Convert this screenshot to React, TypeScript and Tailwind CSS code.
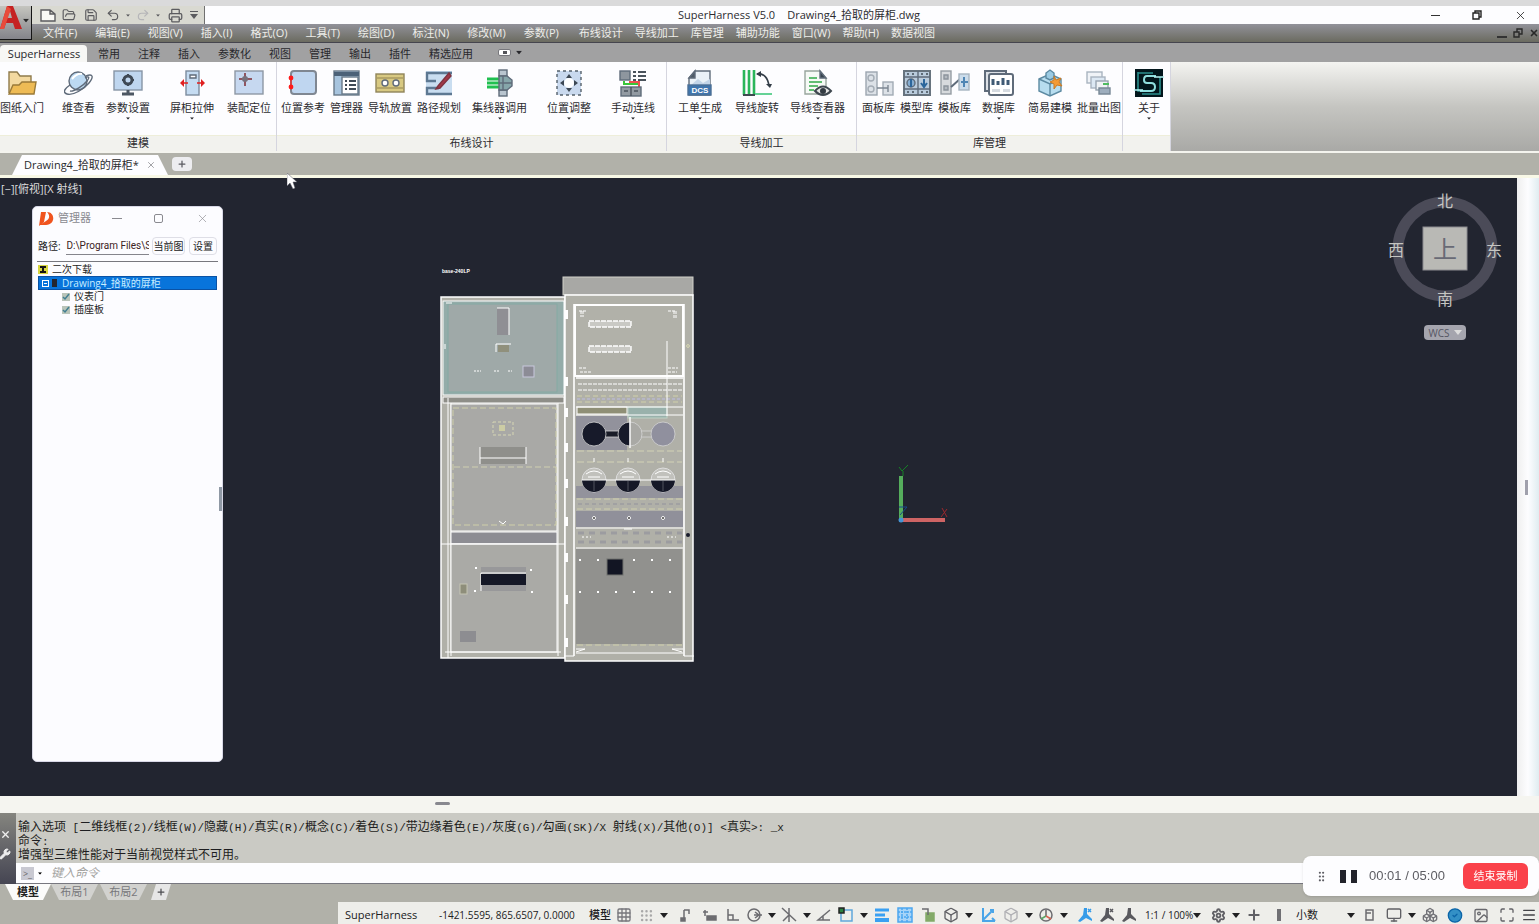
import React from 'react';
import {
  Box,
  Boxes,
  CircleCheck,
  FolderOpen,
  Grid3x3,
  Grip,
  GripVertical,
  Image as ImageIcon,
  Maximize,
  Menu,
  Monitor,
  PersonStanding,
  Plus,
  Printer,
  Redo2,
  Save,
  Settings,
  Undo2,
  Wrench,
  X,
} from 'lucide-react';

interface RibbonTool {
  label: string;
  icon: React.ReactNode;
  space: string;
  menu?: boolean;
}

interface RibbonGroup {
  title: string;
  width: string;
  tools: RibbonTool[];
}

const Icon = ({ children }: { children: React.ReactNode }) => (
  <svg viewBox="0 0 30 28" className="h-7 w-[30px] shrink-0" fill="none" stroke="#5f6b7a" strokeWidth="1.4">
    {children}
  </svg>
);

const FolderIcon = () => (
  <Icon>
    <path d="M2 24V3h8l3 4h11v6" fill="#f3d9a0" stroke="#8f7b4c" />
    <path d="M2 25l4-9h6l3-3h14l-2 12z" fill="#eebb55" stroke="#9a7a38" />
  </Icon>
);

const OrbitIcon = () => (
  <Icon>
    <circle cx="14" cy="12" r="9" fill="#bcd9f2" />
    <path d="M8 10q5-6 10-5" stroke="#ffffff" strokeWidth="2" />
    <path d="M22 7c7-3 8 1 3 7S9 27 3 25s0-7 3-9" />
    <path d="M21 9c4-2 5-1 2 3S10 23 6 22" />
  </Icon>
);

const MonitorIcon = () => (
  <Icon>
    <rect x="1" y="2" width="28" height="19" fill="#bfd6ef" stroke="#8794a5" />
    <circle cx="15" cy="11" r="4" stroke="#3f4955" strokeWidth="3" />
    <path d="M15 5v2M15 15v2M9 11h2M19 11h2" stroke="#3f4955" strokeWidth="2" />
    <path d="M15 21v3M9 25h12" stroke="#4d5763" strokeWidth="3" />
  </Icon>
);

const StretchIcon = () => (
  <Icon>
    <rect x="9" y="2" width="13" height="24" fill="#c5dcf2" stroke="#7c8c9e" />
    <path d="M13 6h6v3h-6z" fill="#ffffff" />
    <path d="M11 14H4M20 14h7" stroke="#e02020" strokeWidth="1.6" />
    <path d="M7 10l-4 4 4 4zM24 10l4 4-4 4z" fill="#e02020" stroke="none" />
  </Icon>
);

const AssembleIcon = () => (
  <Icon>
    <rect x="1" y="2" width="28" height="23" fill="#c6d8f0" stroke="#8d97a4" />
    <path d="M11 4v13M5 10h13" stroke="#8f5560" strokeWidth="2" />
    <circle cx="11" cy="10" r="3" fill="#77707c" stroke="none" />
  </Icon>
);

const PositionIcon = () => (
  <Icon>
    <rect x="3" y="2" width="25" height="23" rx="3" fill="#bfd6f0" stroke="#7f8792" strokeWidth="2" />
    <path d="M3 9v10" stroke="#f03030" />
    <circle cx="3" cy="9" r="2.4" fill="#ff1a1a" stroke="none" />
    <circle cx="3" cy="18" r="2.4" fill="#ff1a1a" stroke="none" />
  </Icon>
);

const ManagerIcon = () => (
  <Icon>
    <rect x="2" y="2" width="25" height="24" fill="#a7c4de" stroke="#697989" />
    <path d="M2 5h25" stroke="#4c6278" strokeWidth="4" />
    <rect x="10" y="8" width="16" height="17" fill="#ffffff" stroke="#697989" />
    <path d="M13 12h2M17 12h7M13 16h2M17 16h7M13 20h2M17 20h7" stroke="#3f4a55" strokeWidth="2" />
  </Icon>
);

const RailIcon = () => (
  <Icon>
    <rect x="1" y="5" width="28" height="18" fill="#d8c982" stroke="#8f845a" />
    <path d="M1 9h28M1 19h28" stroke="#a99a62" />
    <circle cx="10" cy="14" r="3" fill="#ffffff" />
    <circle cx="21" cy="14" r="3" fill="#ffffff" />
  </Icon>
);

const PathIcon = () => (
  <Icon>
    <rect x="2" y="2" width="26" height="24" fill="#c9ddf0" stroke="none" />
    <path d="M28 4H3v8h9M28 25H3v-6h12" stroke="#5d7892" strokeWidth="2.4" />
    <path d="M25 4L14 17l-2 3 4-1L27 7z" fill="#a33848" stroke="#7e3340" />
  </Icon>
);

const ConnectorIcon = () => (
  <Icon>
    <path d="M2 10h14M2 14h14M2 18h14" stroke="#20c050" strokeWidth="3" />
    <rect x="14" y="1" width="8" height="6" fill="#b9c5cf" />
    <rect x="14" y="21" width="8" height="6" fill="#b9c5cf" />
    <path d="M14 7h8l5 4v6l-5 4h-8z" fill="#86a6aa" />
    <path d="M18 7v14M14 14h13" />
  </Icon>
);

const AdjustIcon = () => (
  <Icon>
    <rect x="3" y="2" width="24" height="24" fill="#c9d9ee" stroke="#56616c" strokeWidth="1.4" strokeDasharray="3 3" />
    <circle cx="15" cy="14" r="5" fill="#ffffff" stroke="none" />
    <path d="M15 5l3 4h-6zM15 23l3-4h-6zM6 14l4-3v6zM24 14l-4-3v6z" fill="#3d4854" stroke="none" />
  </Icon>
);

const WiringIcon = () => (
  <Icon>
    <rect x="2" y="2" width="10" height="9" fill="#8e969e" />
    <path d="M15 3h3M20 3h8M15 7h3M20 7h8M15 11h3M20 11h8" stroke="#4a535c" strokeWidth="2" />
    <path d="M6 12v3h14" stroke="#39c639" strokeWidth="2" />
    <path d="M11 13h10v5" stroke="#f05050" strokeWidth="2" />
    <rect x="3" y="18" width="20" height="9" fill="#929aa2" />
    <path d="M13 18v9M6 22h4M16 22h4" stroke="#4a535c" />
  </Icon>
);

const DocIcon = () => (
  <Icon>
    <path d="M4 26V9l6-7h15v24z" fill="#eaf1f7" />
    <path d="M4 9l6-7v7z" fill="#4e5a66" />
    <path d="M6 16l7-6 5 4 7-4v6z" fill="#c3d5e8" stroke="none" />
    <rect x="3" y="16" width="23" height="10" fill="#3f75ad" stroke="#4c6f96" />
    <text x="15" y="24" textAnchor="middle" fontFamily="Liberation Sans" fontSize="8" fontWeight="bold" fill="#ffffff" stroke="none">DCS</text>
  </Icon>
);

const RotateWireIcon = () => (
  <Icon>
    <path d="M2 1v25M7 1v25M12 1v25" stroke="#2ab65a" strokeWidth="2.6" />
    <path d="M1 26h12" stroke="#3f4a50" strokeWidth="2" />
    <path d="M13 25h17" stroke="#65d296" strokeWidth="2" />
    <path d="M15 5c7-1 11 4 12 12" stroke="#333d47" strokeWidth="1.6" />
    <path d="M14 5l5-3v6zM28 19l-4-4h6z" fill="#333d47" stroke="none" />
  </Icon>
);

const InspectIcon = () => (
  <Icon>
    <path d="M2 2h15l6 7v16H2z" fill="#f6faf6" stroke="#98a59d" />
    <path d="M17 2l6 7h-6z" fill="#38444f" />
    <path d="M6 9h8M6 13h13M6 17h9M6 21h5" stroke="#61be73" strokeWidth="2" />
    <path d="M12 22q8-9 16 0-8 8-16 0z" fill="#e5e5e5" stroke="#3f4850" strokeWidth="2" />
    <circle cx="20" cy="22" r="3" fill="#333b43" stroke="none" />
  </Icon>
);

const PanelLibIcon = () => (
  <Icon>
    <rect x="2" y="3" width="11" height="23" fill="#dce1e7" stroke="#9ca5b0" />
    <circle cx="7" cy="9" r="3" stroke="#a4acb5" />
    <circle cx="7" cy="20" r="3" stroke="#a4acb5" />
    <rect x="19" y="13" width="10" height="13" fill="#dde2e8" stroke="#a2abb5" />
    <path d="M13 19h11M24 16v7" stroke="#7c8792" />
  </Icon>
);

const ModelLibIcon = () => (
  <Icon>
    <rect x="2" y="2" width="26" height="24" fill="#b9cbdc" stroke="#67737e" strokeWidth="2" />
    <path d="M16 2v24M2 8h26M2 20h26" />
    <circle cx="9" cy="14" r="4" fill="#86aed2" />
    <path d="M9 10v8M22 10v8M19 14l3 4 3-4" stroke="#2c669b" strokeWidth="2" />
    <path d="M5 5h2M10 5h2M5 23h2M10 23h2M19 5h2M24 5h2M19 23h2M24 23h2" stroke="#424d57" />
  </Icon>
);

const TemplateLibIcon = () => (
  <Icon>
    <rect x="1" y="2" width="10" height="23" fill="#d7dadd" stroke="#969da4" />
    <path d="M4 6h4v4H4zM4 17h4v4H4z" fill="#b4bac0" stroke="#8c949c" />
    <path d="M11 18l9-8" strokeWidth="2" />
    <rect x="19" y="5" width="10" height="16" fill="#cbdceb" stroke="#a6b4c1" />
    <path d="M24 8v10M21 13h7" stroke="#4e85b4" strokeWidth="2" />
  </Icon>
);

const DatabaseIcon = () => (
  <Icon>
    <path d="M1 2h21v20H1z" fill="#dce0e6" strokeWidth="2" />
    <rect x="5" y="5" width="24" height="21" rx="2" fill="#ffffff" strokeWidth="2" />
    <path d="M9 16v-6M14 16v-4M19 16V9M24 16v-5" stroke="#3f5a75" strokeWidth="3" />
    <path d="M8 20h8v3H8zM19 20h7v3h-7z" fill="#d6dbe1" stroke="none" />
  </Icon>
);

const CubeIcon = () => (
  <Icon>
    <path d="M4 10l11-5 11 5v12l-11 5-11-5z" fill="#b7ddef" stroke="#5c8aa2" />
    <path d="M4 10l11 5 11-5M15 15v12" stroke="#5c8aa2" />
    <path d="M11 4l4-3 4 3v5l-4 2-4-2z" fill="#9ccbe3" stroke="#5c8aa2" />
    <path d="M19 7l2 4 5-2-2 4 3 4-5-1-3 4v-5l-4-2 4-2z" fill="#f39a35" stroke="#c97a25" strokeWidth="1" />
  </Icon>
);

const BatchIcon = () => (
  <Icon>
    <rect x="3" y="3" width="15" height="11" fill="#f0f3f7" stroke="#a9b4c0" />
    <rect x="7" y="8" width="14" height="11" fill="#dce8f3" stroke="#a9b4c0" />
    <rect x="12" y="12" width="12" height="9" fill="#eff2f5" stroke="#98a4b0" />
    <path d="M15 19h11v6H15z" fill="#9dadbd" stroke="#788897" />
    <path d="M19 15h6" stroke="#4ebb60" strokeWidth="2" />
  </Icon>
);

const AboutIcon = () => (
  <Icon>
    <rect x="1" y="0" width="28" height="28" fill="#02161c" stroke="none" />
    <path d="M4 3v19h3M4 4h15M26 8v17H8" stroke="#2b8f8d" strokeWidth="1.6" />
    <path d="M22 7H13q-3 0-3 4 0 3 3 3h4q4 0 4 4t-4 4H6" stroke="#8fdede" strokeWidth="2" />
    <path d="M20 8h10M0 21h9" stroke="#b5f5f5" />
  </Icon>
);

const ribbon: RibbonGroup[] = [
  {
    title: '建模',
    width: 'w-[277px]',
    tools: [
      { label: '图纸入门', icon: <FolderIcon />, space: '' },
      { label: '维查看', icon: <OrbitIcon />, space: 'ml-[18px]' },
      { label: '参数设置', icon: <MonitorIcon />, space: 'ml-[11px]', menu: true },
      { label: '屏柜拉伸', icon: <StretchIcon />, space: 'ml-5', menu: true },
      { label: '装配定位', icon: <AssembleIcon />, space: 'ml-[13px]' },
    ],
  },
  {
    title: '布线设计',
    width: 'w-[390px]',
    tools: [
      { label: '位置参考', icon: <PositionIcon />, space: 'ml-1' },
      { label: '管理器', icon: <ManagerIcon />, space: 'ml-[5px]' },
      { label: '导轨放置', icon: <RailIcon />, space: 'ml-[5px]' },
      { label: '路径规划', icon: <PathIcon />, space: 'ml-[5px]' },
      { label: '集线器调用', icon: <ConnectorIcon />, space: 'ml-[11px]', menu: true },
      { label: '位置调整', icon: <AdjustIcon />, space: 'ml-5', menu: true },
      { label: '手动连线', icon: <WiringIcon />, space: 'ml-5', menu: true },
    ],
  },
  {
    title: '导线加工',
    width: 'w-[190px]',
    tools: [
      { label: '工单生成', icon: <DocIcon />, space: 'ml-[11px]', menu: true },
      { label: '导线旋转', icon: <RotateWireIcon />, space: 'ml-[13px]' },
      { label: '导线查看器', icon: <InspectIcon />, space: 'ml-[11px]', menu: true },
    ],
  },
  {
    title: '库管理',
    width: 'w-[266px]',
    tools: [
      { label: '面板库', icon: <PanelLibIcon />, space: 'ml-[5px]' },
      { label: '模型库', icon: <ModelLibIcon />, space: 'ml-[5px]' },
      { label: '模板库', icon: <TemplateLibIcon />, space: 'ml-[5px]' },
      { label: '数据库', icon: <DatabaseIcon />, space: 'ml-[11px]', menu: true },
      { label: '简易建模', icon: <CubeIcon />, space: 'ml-[13px]' },
      { label: '批量出图', icon: <BatchIcon />, space: 'ml-[5px]' },
    ],
  },
  {
    title: '',
    width: 'w-12',
    tools: [{ label: '关于', icon: <AboutIcon />, space: 'ml-[11px]', menu: true }],
  },
];

const menus = ['文件(F)', '编辑(E)', '视图(V)', '插入(I)', '格式(O)', '工具(T)', '绘图(D)', '标注(N)', '修改(M)', '参数(P)'];
const extraMenus = ['布线设计', '导线加工', '库管理', '辅助功能', '窗口(W)', '帮助(H)', '数据视图'];
const ribbonTabs = ['常用', '注释', '插入', '参数化', '视图', '管理', '输出', '插件', '精选应用'];

const history = [
  '输入选项 [二维线框(2)/线框(W)/隐藏(H)/真实(R)/概念(C)/着色(S)/带边缘着色(E)/灰度(G)/勾画(SK)/X 射线(X)/其他(O)] <真实>: _x',
  '命令:',
  '增强型三维性能对于当前视觉样式不可用。',
];

const hinges = [310, 377, 408, 443, 479, 517, 553, 595, 638];

const Arrow = ({ className = '' }: { className?: string }) => (
  <svg viewBox="0 0 8 5" className={`h-[5px] w-2 shrink-0 ${className}`}>
    <path d="M0 0h8L4 5z" fill="currentColor" />
  </svg>
);

const Cabinet = () => (
  <svg viewBox="430 255 280 415" className="absolute top-[77px] left-[430px] h-[415px] w-[280px]" fill="none" stroke="#ffffff">
    <text x="442" y="273" fontFamily="Liberation Sans" fontSize="5" fontWeight="bold" fill="#ffffff" stroke="none">base-240LP</text>

    {/* left cabinet with three doors */}
    <rect x="441" y="297" width="124" height="361" fill="#b0b0a8" strokeWidth="1.5" />
    <rect x="443" y="301" width="121" height="94" fill="#94aca9" />
    <rect x="448" y="304" width="109" height="88" fill="#9fa9a8" stroke="#84aaa4" />
    <rect x="497" y="308" width="12" height="27" fill="#8f8f94" stroke="none" />
    <path d="M497 308h12v27M496 352v-8h15" />
    <rect x="498" y="345" width="11" height="7" fill="#90907c" stroke="none" />
    <rect x="523" y="366" width="11" height="11" fill="#8c8c96" stroke="#c8c8dc" />
    <path d="M474 371h7M494 371h6M508 371h4" strokeDasharray="2 1" />
    <path d="M445 344v5M446 303h6" />
    <rect x="443" y="397" width="121" height="6" fill="#8e8e88" />
    <path d="M448 398v260M451 403v253M558 403v253" />
    <rect x="451" y="404" width="106" height="127" fill="#a9a9a6" />
    <rect x="453" y="408" width="103" height="117" stroke="#cfcfa9" strokeDasharray="6 3" />
    <rect x="493" y="422" width="20" height="13" stroke="#d6d6b4" strokeDasharray="3 2" />
    <rect x="499" y="425" width="6" height="6" fill="#cccca4" stroke="none" />
    <rect x="480" y="447" width="46" height="17" fill="#8f8f8b" stroke="none" />
    <path d="M480 447v17M480 458h46M526 447v17" />
    <path d="M454 467h102" stroke="#cfcfb0" strokeDasharray="6 3" />
    <path d="M499 521l4 3 3-3" />
    <rect x="451" y="532" width="106" height="12" fill="#8d8d93" />
    <rect x="451" y="544" width="106" height="108" fill="#aaaaa6" />
    <path d="M441 544h124M445 652h116" />
    <rect x="481" y="567" width="45" height="24" fill="#98989a" stroke="none" />
    <path d="M481 591v-18h45" />
    <rect x="481" y="574" width="45" height="11" fill="#151827" stroke="none" />
    <rect x="460" y="584" width="7" height="10" fill="#8e8e7a" stroke="#c5c5b4" />
    <rect x="460" y="631" width="16" height="11" fill="#8d8d91" stroke="none" />
    <path d="M475 568h2M530 570h2M474 591h2M531 592h2" strokeWidth="2" />

    {/* right cabinet frame */}
    <rect x="563" y="277" width="130" height="18" fill="#a8a8a5" stroke="#d2d2ca" />
    <rect x="565" y="295" width="128" height="366" fill="#b0b0a8" strokeWidth="1.5" />
    <path d="M574 304v352M684 304v352" strokeWidth="1.6" />
    <path d="M564 656h10M684 656h10" />
    {hinges.map((y) => (
      <rect key={y} x="565" y={y} width="3" height="9" fill="#ffffff" stroke="none" />
    ))}
    <rect x="575" y="305" width="108" height="71" fill="#b1b1a9" strokeWidth="2" />
    <path d="M579 311h7M581 311v6M583 311v6M668 311h8M674 311v7M676 311v7M579 368h7M580 372h11M668 368h10M668 372h9" strokeDasharray="3 1" />
    <rect x="589" y="321" width="42" height="6" fill="#c9c9c4" strokeWidth="1.4" strokeDasharray="5 1" />
    <rect x="589" y="346" width="42" height="6" fill="#c9c9c4" strokeWidth="1.4" strokeDasharray="5 1" />
    <path d="M576 378h107" strokeWidth="1.4" />
    <path d="M578 384h104M578 390h104" strokeDasharray="4 1" />
    <path d="M577 396h105M577 402h105" stroke="#d0d0aa" strokeDasharray="5 3" />
    <path d="M577 399h105" stroke="#bcbce4" strokeDasharray="3 2" />
    <rect x="577" y="407" width="50" height="7" fill="#8f8f76" />
    <rect x="628" y="407" width="39" height="11" fill="#99b1ab" stroke="#bdd2c5" />
    <path d="M667 341v75M576 407h107M576 415h107" />

    {/* bushings */}
    <rect x="576" y="416" width="51" height="34" fill="#92929c" stroke="none" />
    <g stroke="#d4d4d4" strokeWidth="0.8">
      <path d="M604 431h16v6h-16z" fill="#191c28" />
      <path d="M641 431h12v6h-12z" fill="#aaaaa4" />
      <circle cx="594" cy="434" r="12" fill="#171a2a" />
      <path d="M630 422a12 12 0 0 0 0 24z" fill="#171a2a" />
      <path d="M630 422a12 12 0 0 1 0 24" fill="#a9a9a5" />
      <circle cx="663" cy="434" r="12" fill="#90909e" />
    </g>
    <path d="M630 417v31" strokeWidth="1.4" />
    <path d="M577 451h105M577 462h105" stroke="#d2d2b5" strokeDasharray="7 3" />
    <rect x="576" y="486" width="107" height="12" fill="#93939c" stroke="none" />
    {[594, 628, 663].map((x) => (
      <g key={x}>
        <circle cx={x} cy="480" r="12" fill="#c1c1bc" stroke="#dddddd" />
        <path d={`M${x - 12} 480a12 12 0 0 0 24 0z`} fill="#151827" stroke="none" />
        <path d={`M${x - 8} 474q8-6 16 0M${x - 6} 477h12`} />
        <path d={`M${x} 481v10`} stroke="#50525f" />
        <circle cx={x} cy="518" r="1.5" fill="#333333" />
        <path d={`M${x} 458v4`} />
      </g>
    ))}
    <path d="M582 480h93" />
    <path d="M577 499h105M577 509h105" stroke="#cfcfad" strokeDasharray="6 3" />
    <path d="M578 504h104" stroke="#92929c" strokeDasharray="4 3" />
    <rect x="576" y="511" width="107" height="16" fill="#90909a" stroke="none" />
    {[594, 629, 663].map((x) => (
      <circle key={x} cx={x} cy="518" r="1.5" fill="#333333" />
    ))}
    <path d="M576 528h107M624 529h8M576 548h107" />
    <path d="M578 533h104M578 542h104" stroke="#9c9ca0" strokeWidth="3" strokeDasharray="6 5" />
    <path d="M582 537h9M667 537h9" strokeDasharray="2 2" />
    <rect x="576" y="549" width="106" height="95" fill="#91918e" stroke="none" />
    <path d="M579 560h100M579 592h100" strokeDasharray="2 16" strokeWidth="2" />
    <rect x="607" y="559" width="16" height="16" fill="#121523" stroke="#70726f" />
    <path d="M577 645h105" stroke="#cfcfaa" strokeDasharray="6 3" />
    <path d="M576 649h9l-9 3M683 649h-11l10 3M576 653h107" />
    <circle cx="688" cy="535" r="2" fill="#171a2a" stroke="none" />
    <circle cx="688" cy="346" r="1.4" stroke="#d8d8b2" />
  </svg>
);

const UcsIcon = () => (
  <svg viewBox="895 460 55 66" className="absolute top-[282px] left-[895px] h-[66px] w-[55px]" fill="none">
    <path d="M901 476v44" stroke="#55ad5c" strokeWidth="4" />
    <path d="M902 520h43" stroke="#ce6464" strokeWidth="4" />
    <path d="M899 467l3 4 6-6M903 471v5" stroke="#168126" />
    <path d="M942 508l5 9M947 509l-6 8" stroke="#9d282d" />
    <path d="M899 507h8l-7 8" stroke="#174b8c" />
    <circle cx="901" cy="520" r="2.5" fill="#4595d5" />
  </svg>
);

const ViewCube = () => (
  <div className="absolute top-1 right-[10px] w-[124px]">
    <svg viewBox="0 -8 124 132" className="h-[132px] w-full" fontFamily="Noto Sans CJK SC, sans-serif" fontSize="16" textAnchor="middle" fill="#c5c5c2">
      <circle cx="62" cy="59" r="47" fill="none" stroke="#4b4b58" strokeWidth="11" />
      <rect x="40" y="37" width="44" height="43" fill="#b9b9b5" stroke="#8c8c90" />
      <text x="62" y="68" fontSize="24" fill="#686a75">上</text>
      <text x="62" y="17">北</text>
      <text x="13" y="66">西</text>
      <text x="111" y="66">东</text>
      <text x="62" y="115">南</text>
    </svg>
    <button className="mx-auto mt-[11px] flex h-[15px] w-[42px] items-center justify-center gap-1 rounded-sm bg-[#a5a5ae] text-[10px] leading-none text-[#555563]">
      WCS <Arrow className="text-[#dddddd]" />
    </button>
  </div>
);

const ManagerPalette = () => (
  <section className="absolute top-7 left-8 flex h-[556px] w-[191px] flex-col rounded-[5px] border border-[#d8d8e6] bg-[#fcfcff]">
    <div className="flex h-[23px] items-center px-[5px] text-[#8a8a90]">
      <svg viewBox="0 0 16 16" className="h-4 w-4">
        <path d="M3 1h5L6 11l-5 4zM9 1c8 0 9 12-1 13H2l6-4c4-2 4-6 1-9z" fill="#f0541e" />
      </svg>
      <span className="ml-1 flex-1 text-[11px]">管理器</span>
      <button aria-label="最小化" className="mr-8 h-px w-2.5 bg-[#8a8a90]" />
      <button aria-label="最大化" className="mr-[33px] h-[9px] w-[9px] rounded-[2px] border border-[#8a8a90]" />
      <button aria-label="关闭" className="mr-2">
        <X size={13} strokeWidth={1.2} />
      </button>
    </div>
    <div className="mt-[7px] flex h-[18px] items-center px-[5px] text-[10px] text-[#222222]">
      <label htmlFor="path" className="w-[29px]">路径:</label>
      <input id="path" defaultValue="D:\Program Files\S" className="h-full w-[84px] min-w-0 border-b border-[#85858c] font-[Roboto,sans-serif] text-[#3b2222] outline-none" />
      <button className="ml-[3px] h-full w-[33px] shrink-0 rounded-sm border border-[#dedee6]">当前图</button>
      <button className="ml-1 h-full w-7 shrink-0 rounded-sm border border-[#dedee6]">设置</button>
    </div>
    <div className="mx-1 mt-[6px] border-t border-[#77777e]" />
    <ul className="mx-[5px] pt-px text-[10px] leading-[13px] text-[#1c1c1c]">
      <li className="flex h-[13px] items-center">
        <svg viewBox="0 0 10 9" className="mr-[4px] h-[9px] w-[10px]">
          <path d="M0 0h10v9H0z" fill="#d8d640" />
          <path d="M2 1h6v2H6v3h2v2H2V6h2V3H2z" fill="#151515" />
        </svg>
        二次下载
      </li>
      <li>
        <div className="flex h-[14px] items-center border border-[#0a52a5] bg-[#0874db] text-[#c9edff]">
          <span className="mx-[3px] flex h-[7px] w-[7px] items-center justify-center border border-white">
            <span className="h-px w-[3px] bg-white" />
          </span>
          <span className="mr-[5px] h-2 w-[5px] bg-[#242630]" />
          Drawing4_拾取的屏柜
        </div>
        <ul className="pl-6">
          {['仪表门', '插座板'].map((name) => (
            <li key={name} className="flex h-[13px] items-center">
              <svg viewBox="0 0 8 8" className="mr-[4px] h-2 w-2">
                <path d="M0 0h8v8H0z" fill="#b9c4b9" />
                <path d="M1 4l2 2 4-5" fill="none" stroke="#427f91" strokeWidth="1.5" />
              </svg>
              {name}
            </li>
          ))}
        </ul>
      </li>
    </ul>
    <div className="absolute top-[280px] right-0 h-6 w-[3px] bg-[#8f98a4]" />
  </section>
);

const Glyph = ({ children, tone = '#6c6c70' }: { children: React.ReactNode; tone?: string }) => (
  <svg viewBox="0 0 16 16" className="h-4 w-4" fill="none" stroke={tone} strokeWidth="1.5">
    {children}
  </svg>
);

// Annotation figure: a head on a three-pointed body
const Figure = ({ tone, mark }: { tone: string; mark?: boolean }) => (
  <svg viewBox="0 0 16 16" className="h-4 w-4">
    <path d="M7 1h3v6l5 5v2l-6-3-6 4-2-1 5-6z" fill={tone} />
    {mark && <path d="M11 2l3 3M14 2l-3 3" stroke={tone} strokeWidth="1.5" />}
  </svg>
);

interface StatusItem {
  name: string;
  icon: React.ReactNode;
  menu?: boolean;
  space: string;
}

const statusItems: StatusItem[] = [
  { name: '栅格', icon: <Grid3x3 size={16} color="#77777c" />, space: 'ml-1' },
  { name: '捕捉模式', icon: <Grip size={15} color="#a8a8a8" />, menu: true, space: 'ml-1.5' },
  { name: '推断约束', icon: <Glyph><path d="M7 3h5v4M7 3v9" /><path d="M4 11h4v3H4z" fill="#6c6c70" /></Glyph>, space: 'ml-[9px]' },
  { name: '动态输入', icon: <Glyph><path d="M2 5h5M4 3v6" /><path d="M6 9h9v4H6z" fill="#6c6c70" /></Glyph>, space: 'ml-2' },
  { name: '正交', icon: <Glyph><path d="M3 2v11h11M3 8h5v5" /></Glyph>, space: 'ml-2' },
  { name: '极轴追踪', icon: <Glyph><circle cx="8" cy="8" r="6" /><path d="M8 8h8M9 5l4 3-4 3" /></Glyph>, menu: true, space: 'ml-[5px]' },
  { name: '等轴测草图', icon: <Glyph><path d="M1 1l14 13M8 1v14M2 14l6-6" /></Glyph>, menu: true, space: 'ml-[5px]' },
  { name: '对象追踪', icon: <Glyph><path d="M14 3L2 13h12M7 9v4" /></Glyph>, space: 'ml-[5px]' },
  { name: '对象捕捉', icon: <Glyph tone="#60a8dc"><path d="M3 3h11v11H3z" /><path d="M1 1h5v5H1z" fill="#2b8240" stroke="#222222" /></Glyph>, menu: true, space: 'ml-1.5' },
  { name: '线宽', icon: <Glyph tone="#3aa0f2"><path d="M1 3h14M1 8h10" strokeWidth="3" /><path d="M1 13h14" strokeWidth="4" /></Glyph>, space: 'ml-1.5' },
  { name: '透明度', icon: <Glyph tone="#4ca7ef"><path d="M1 1h14v14H1z" fill="#a7d4f8" /><path d="M1 5h14M1 10h14M5 1v14M10 1v14" strokeDasharray="2 1" /></Glyph>, space: 'ml-[7px]' },
  { name: '选择循环', icon: <Glyph><path d="M6 6h8v8H6z" fill="#83aa68" stroke="#83aa68" /><path d="M2 2h6v6" /></Glyph>, space: 'ml-[7px]' },
  { name: '三维捕捉', icon: <Box size={16} color="#606065" />, menu: true, space: 'ml-[7px]' },
  { name: '动态坐标系', icon: <Glyph tone="#4aa5e8"><path d="M3 1v13h12M3 13L13 3M10 3h3v3M12 11l3 3" strokeWidth="2" /></Glyph>, space: 'ml-[7px]' },
  { name: '选择过滤', icon: <Box size={16} color="#b0b0b4" />, menu: true, space: 'ml-[7px]' },
  { name: '小控件', icon: <Glyph><circle cx="8" cy="8" r="6" /><path d="M8 3v6" stroke="#666666" /><path d="M8 9l-5 3" stroke="#58a865" /><path d="M8 9l5 3" stroke="#d56252" /></Glyph>, menu: true, space: 'ml-[5px]' },
  { name: '注释可见性', icon: <Figure tone="#369ce9" mark />, space: 'ml-[9px]' },
  { name: '自动缩放', icon: <Figure tone="#59595e" mark />, space: 'ml-1.5' },
  { name: '注释比例', icon: <Figure tone="#59595e" />, space: 'ml-1.5' },
];

const trailingItems: StatusItem[] = [
  { name: '快捷特性', icon: <Glyph><path d="M5 3h7v10H5zM5 6h5" /></Glyph>, space: 'ml-1.5' },
  { name: '锁定界面', icon: <Monitor size={16} color="#606065" />, menu: true, space: 'ml-[9px]' },
  { name: '隔离对象', icon: <Boxes size={16} color="#737378" />, space: 'ml-1.5' },
  { name: '硬件加速', icon: <CircleCheck size={17} color="#0c65a8" fill="#3390c6" />, space: 'ml-[9px]' },
  { name: '性能', icon: <ImageIcon size={17} color="#68686d" />, space: 'ml-2.5' },
  { name: '全屏显示', icon: <Maximize size={16} color="#606065" />, space: 'ml-2.5' },
  { name: '自定义', icon: <Menu size={16} color="#444448" />, space: 'ml-1.5' },
];

const StatusButton = ({ item }: { item: StatusItem }) => (
  <button aria-label={item.name} className={`flex shrink-0 items-center ${item.space}`}>
    <span className="flex w-4 justify-center">{item.icon}</span>
    {item.menu && <Arrow className="ml-1.5" />}
  </button>
);

const Titlebar = () => (
  <header className="relative">
    <div className="flex h-[18px] items-center bg-[#fdfdff]">
      <div className="flex h-full w-[205px] shrink-0 items-center border-r border-[#707070] bg-[#d9d9d1] pl-10 text-[#5b5b5f]">
        <button aria-label="新建">
          <svg viewBox="0 0 16 14" className="h-3.5 w-4" fill="#f8f8f5" stroke="currentColor" strokeWidth="1.4">
            <path d="M1 2h9l5 4v7H1zM10 2v4h5" />
          </svg>
        </button>
        <button aria-label="打开" className="ml-[6px]"><FolderOpen size={14} /></button>
        <button aria-label="保存" className="ml-2"><Save size={14} /></button>
        <button aria-label="放弃" className="ml-2"><Undo2 size={14} /></button>
        <Arrow className="ml-1 scale-50" />
        <button aria-label="重做" className="ml-1 text-[#b5b5b8]"><Redo2 size={14} /></button>
        <Arrow className="ml-1 scale-50" />
        <button aria-label="打印" className="ml-1.5"><Printer size={15} /></button>
        <button aria-label="自定义快速访问工具栏" className="ml-[7px] border-t border-current pt-0.5"><Arrow /></button>
      </div>
      <h1 className="flex flex-1 justify-center gap-3 pr-[38px] text-[11px] leading-[18px] text-[#2c2c30]">
        <span>SuperHarness V5.0</span>
        <span>Drawing4_拾取的屏柜.dwg</span>
      </h1>
      <div className="flex items-center text-[#222222]">
        <button aria-label="最小化" className="h-px w-[9px] bg-[#333333]" />
        <button aria-label="还原" className="ml-8">
          <svg viewBox="0 0 10 10" className="h-2.5 w-2.5" fill="none" stroke="currentColor" strokeWidth="1.4">
            <path d="M1 3h6v6H1zM3 3V1h6v6H7" />
          </svg>
        </button>
        <button aria-label="关闭" className="mr-3 ml-8"><X size={13} strokeWidth={1.5} /></button>
      </div>
    </div>
    <nav className="flex h-[19px] items-center border-b border-[#45454e] bg-linear-to-b from-[#92929a] to-[#6b6b60] pl-[25px] text-[11px] leading-[18px] text-[#eeeeea]">
      {menus.map((m) => (
        <button key={m} className="ml-[18px] shrink-0">{m}</button>
      ))}
      <span className="w-2" />
      {extraMenus.map((m) => (
        <button key={m} className="ml-3 shrink-0">{m}</button>
      ))}
      <div className="ml-auto flex items-end gap-1.5 text-[#292929]">
        <span className="h-0.5 w-2.5 bg-[#333333]" />
        <svg viewBox="0 0 10 10" className="h-2.5 w-2.5" fill="none" stroke="currentColor" strokeWidth="1.4">
          <path d="M1 4h5v5H1zM4 4V1h5v5H6" />
        </svg>
        <X size={10} strokeWidth={4} />
      </div>
    </nav>
    <button aria-label="应用程序菜单" className="absolute top-0 left-0 flex h-[34px] w-8 items-start border-r border-b border-[#151515] bg-linear-to-b from-[#c5c5bf] to-[#84848a]">
      <svg viewBox="0 0 22 24" className="h-6 w-[22px]">
        <path d="M0 23L7 0h6l9 23h-7l-2-6H6l-2 6zM7 12h5L10 5z" fill="#c52222" fillRule="evenodd" />
        <path d="M7 0L0 23h4l7-20z" fill="#e84b3b" />
      </svg>
      <Arrow className="mt-3 scale-75 text-[#292929]" />
    </button>
  </header>
);

const Ribbon = () => (
  <>
    <div className="flex h-[19px] items-end bg-[#a1a1a2] text-[11px] leading-[16px] text-[#28282c]">
      <button className="h-[17px] w-[87px] rounded-t-sm bg-[#f7f7f5] pl-px">SuperHarness</button>
      <div className="ml-[11px] flex items-center gap-[18px]">
        {ribbonTabs.map((t) => (
          <button key={t}>{t}</button>
        ))}
      </div>
      <button aria-label="最小化功能区" className="ml-[25px] flex items-center gap-1 pb-1.5">
        <span className="flex h-[7px] w-[13px] items-center justify-center rounded-[2px] border border-[#77777c] bg-white">
          <span className="h-[3px] w-1 bg-[#55555a]" />
        </span>
        <Arrow className="scale-75" />
      </button>
    </div>
    <div className="flex h-[89px] bg-linear-to-b from-[#f4f4f1] via-[#c5c5c1] to-[#a9a9a6] text-[11px] leading-[14px] text-[#2c2c30]">
      {ribbon.map((group) => (
        <section key={group.width} className={`flex shrink-0 flex-col border-r border-[#d5d5df] bg-[#fdfdff] ${group.width}`}>
          <div className="flex h-[73px] items-start pt-[7px]">
            {group.tools.map((tool) => (
              <button key={tool.label} className={`flex shrink-0 flex-col items-center whitespace-nowrap ${tool.space}`}>
                {tool.icon}
                <span className="mt-1">{tool.label}</span>
                {tool.menu && <Arrow className="mt-px scale-50" />}
              </button>
            ))}
          </div>
          <h2 className="h-4 border-t border-[#eeeeda] bg-[#f2f2ee] text-center">{group.title}</h2>
        </section>
      ))}
    </div>
  </>
);

const CommandPanel = () => (
  <section className="flex">
    <div className="flex w-4 shrink-0 flex-col items-center gap-2 bg-linear-to-b from-[#85857f] to-[#454552] pt-4 text-[#eeeeee]">
      <X size={11} strokeWidth={3} className="mr-1.5" />
      <Wrench size={12} className="mr-1.5" fill="currentColor" />
    </div>
    <div className="min-w-0 flex-1">
      <div className="h-[50px] bg-[#cacac4] pt-[7px] pl-0.5 text-[12px] leading-[14px] text-[#1d1d20]">
        {history.map((line) => (
          <p key={line} className="h-[14px] whitespace-nowrap">
            {line.split(/([\x20-\x7e]+)/).map((part, i) => (
              <span key={i} className={i % 2 ? 'font-["Liberation_Mono",monospace] text-[11px] whitespace-pre' : ''}>{part}</span>
            ))}
          </p>
        ))}
      </div>
      <div className="flex h-[21px] items-center border-b border-[#77777f] bg-[#fdfdff] pl-[5px]">
        <span className="flex h-[13px] w-[13px] items-center justify-center bg-[#c9c9d2] text-[9px] leading-none text-[#666666]">&gt;_</span>
        <Arrow className="ml-0.5 scale-50" />
        <input aria-label="键入命令" placeholder="键入命令" className="ml-[7px] flex-1 text-[12px] leading-4 italic outline-none placeholder:text-[#a2a2a0]" />
      </div>
    </div>
  </section>
);

const App: React.FC = () => {
  return (
    <div className='flex min-h-screen flex-col overflow-hidden bg-[#b1b1a9] font-["Open_Sans","Noto_Sans_CJK_SC",sans-serif]'>
      <div className="h-1.5 bg-[#dadadb]" />
      <Titlebar />
      <Ribbon />

      <div className="flex h-[27px] items-end border-t-2 border-b-[3px] border-t-[#f4f4ee] border-b-[#f8f8e6] text-[11px] text-[#2b2b2e]">
        <div className="ml-3 flex h-5 w-[156px] items-center bg-[#fdfdff] pl-3 leading-5 [clip-path:polygon(0_100%,10px_0,146px_0,100%_100%)]">
          <span className="w-[122px] whitespace-nowrap">Drawing4_拾取的屏柜*</span>
          <button aria-label="关闭图形"><X size={10} color="#909095" /></button>
        </div>
        <button aria-label="新图形" className="mb-1 ml-1 flex h-3.5 w-5 items-center justify-center rounded bg-[#ededf0]">
          <Plus size={10} strokeWidth={3} color="#5b5b61" />
        </button>
      </div>

      <main className="flex flex-1">
        <div className="relative flex-1 overflow-hidden bg-[#222530]">
          <p className="pt-[3px] pl-px text-[11px] leading-[16px] text-[#dcdcdc]">[−][俯视][X 射线]</p>
          <ManagerPalette />
          <Cabinet />
          <UcsIcon />
          <ViewCube />
        </div>
        <div className="flex w-[22px] shrink-0 items-center justify-center bg-linear-to-r from-[#efefef] via-[#fdfdff] to-[#e0ecf0]">
          <span className="mr-1 h-[15px] w-[3px] bg-[#a0a0ac]" />
        </div>
      </main>
      <div className="h-[17px] bg-[#f5f5f0] pt-1.5">
        <div className="ml-[435px] h-[3px] w-[15px] rounded-sm bg-[#88888f]" />
      </div>

      <CommandPanel />

      <div className="flex h-[18px] items-start text-[11px] leading-[16px] text-[#77777b]">
        <button className="ml-[5px] h-4 w-[46px] bg-[#fbfbfa] font-bold text-[#222222] [clip-path:polygon(0_0,100%_0,38px_100%,8px_100%)]">模型</button>
        <button className="h-4 w-[47px] bg-[#d2d2cf] [clip-path:polygon(0_0,100%_0,39px_100%,8px_100%)]">布局1</button>
        <button className="ml-0.5 h-4 w-[47px] bg-[#d2d2cf] [clip-path:polygon(0_0,100%_0,39px_100%,8px_100%)]">布局2</button>
        <button aria-label="新建布局" className="ml-1 flex h-4 w-5 items-center justify-center bg-[#e6e6e6] [clip-path:polygon(5px_0,100%_0,15px_100%,0_100%)]">
          <Plus size={10} strokeWidth={3} color="#4e4e52" />
        </button>
      </div>

      <footer className="ml-[338px] flex h-[22px] items-center overflow-hidden bg-[#eeeeea] pt-1 pl-[7px] text-[11px] leading-[16px] whitespace-nowrap text-[#202022]">
        <span className="w-[94px] shrink-0">SuperHarness</span>
        <span className="w-[149px] shrink-0 text-[10px] font-medium">-1421.5595, 865.6507, 0.0000</span>
        <button className="w-6 shrink-0 font-medium">模型</button>
        {statusItems.map((item) => (
          <StatusButton key={item.name} item={item} />
        ))}
        <button className="ml-2 flex w-14 shrink-0 items-center justify-between text-[10px]">
          1:1 / 100% <Arrow />
        </button>
        <StatusButton item={{ name: '切换工作空间', icon: <Settings size={15} color="#606065" strokeWidth={3} />, menu: true, space: 'ml-[9px]' }} />
        <button aria-label="注释监视器" className="ml-1.5 shrink-0"><Plus size={16} color="#606065" strokeWidth={3} /></button>
        <button aria-label="单位" className="ml-[15px] h-3 w-1 shrink-0 bg-[#707074]" />
        <label className="relative ml-[15px] flex w-[59px] shrink-0 items-center">
          <select aria-label="单位格式" className="w-full appearance-none outline-none">
            <option>小数</option>
          </select>
          <Arrow className="absolute right-0" />
        </label>
        {trailingItems.map((item) => (
          <StatusButton key={item.name} item={item} />
        ))}
      </footer>

      {/* screen recorder */}
      <div className="fixed right-0 bottom-7 flex h-10 w-[236px] items-center rounded-lg bg-[#fdfdff] pl-3 text-[12px] text-[#5d5d63] shadow">
        <GripVertical size={13} />
        <button aria-label="暂停" className="ml-3 flex gap-[5px]">
          <span className="h-[13px] w-[6px] bg-[#22232b]" />
          <span className="h-[13px] w-[6px] bg-[#22232b]" />
        </button>
        <span className='ml-3 w-[76px] font-["Liberation_Sans",sans-serif] text-[13px] whitespace-nowrap'>00:01 / 05:00</span>
        <button className="mr-[11px] ml-auto h-[26px] w-[65px] rounded-md bg-[#fa414a] text-[11px] text-white">结束录制</button>
      </div>

      <svg viewBox="0 0 10 16" className="pointer-events-none fixed top-[173px] left-[287px] h-4 w-2.5">
        <path d="M0 0v13l3-3 3 6 2-1-2-6h4z" fill="#ffffff" stroke="#555560" strokeWidth="0.5" />
      </svg>
    </div>
  );
};

export default App;
